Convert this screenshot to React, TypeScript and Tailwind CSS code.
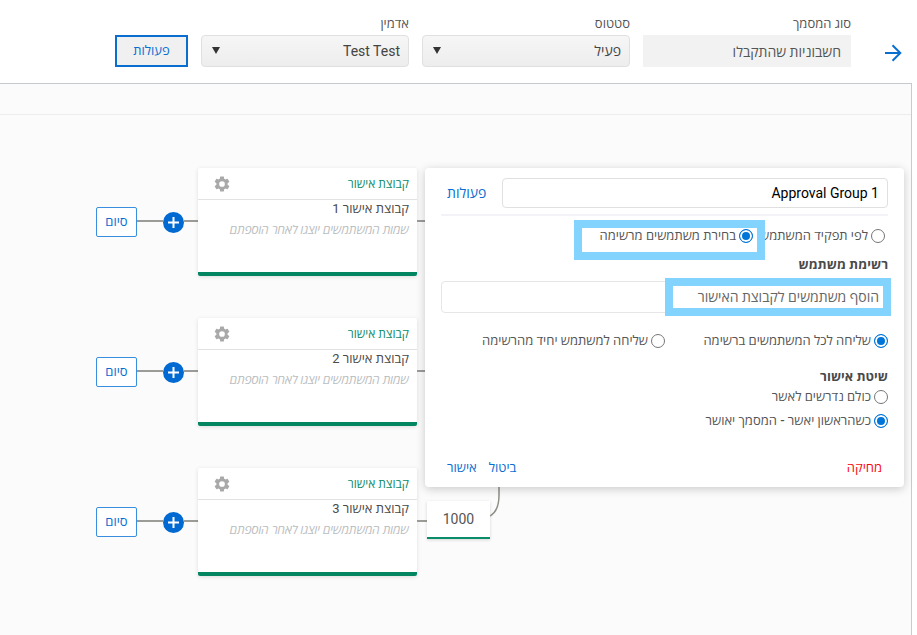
import { useState } from "react";

const approvalGroups = [
  { id: 1, name: "קבוצת אישור 1" },
  { id: 2, name: "קבוצת אישור 2" },
  { id: 3, name: "קבוצת אישור 3", amount: "1000" },
];

const GearIcon = () => (
  <svg viewBox="0 0 24 24" className="w-[18px] h-[18px]" fill="#a9a9a9" aria-hidden="true">
    <path d="M19.43 12.98c.04-.32.07-.64.07-.98s-.03-.66-.07-.98l2.11-1.65c.19-.15.24-.42.12-.64l-2-3.46c-.12-.22-.39-.3-.61-.22l-2.49 1c-.52-.4-1.08-.73-1.69-.98l-.38-2.65C14.46 2.18 14.25 2 14 2h-4c-.25 0-.46.18-.49.42l-.38 2.65c-.61.25-1.17.59-1.69.98l-2.49-1c-.23-.09-.49 0-.61.22l-2 3.46c-.13.22-.07.49.12.64l2.11 1.65c-.04.32-.07.65-.07.98s.03.66.07.98l-2.11 1.65c-.19.15-.24.42-.12.64l2 3.46c.12.22.39.3.61.22l2.49-1c.52.4 1.08.73 1.69.98l.38 2.65c.03.24.24.42.49.42h4c.25 0 .46-.18.49-.42l.38-2.65c.61-.25 1.17-.59 1.69-.98l2.49 1c.23.09.49 0 .61-.22l2-3.46c.12-.22.07-.49-.12-.64l-2.11-1.65zM12 15.8a3.8 3.8 0 1 1 0-7.6 3.8 3.8 0 0 1 0 7.6z" />
  </svg>
);

const SelectField = ({ id, label, options }: { id: string; label: string; options: string[] }) => (
  <div className="flex-1 min-w-0">
    <label htmlFor={id} className="block text-[13px] leading-5 text-[#555]">
      {label}
    </label>
    <div className="relative mt-px">
      <select
        id={id}
        className="w-full h-8 appearance-none rounded border border-[#e0e0e0] bg-linear-to-b from-[#f6f6f6] to-[#ededed] pr-2 pl-8 text-sm text-[#444]"
      >
        {options.map((option) => (
          <option key={option}>{option}</option>
        ))}
      </select>
      <svg viewBox="0 0 8 7" className="absolute left-[11px] top-3 w-2 h-[7px] pointer-events-none" aria-hidden="true">
        <path d="M0 0h8L4 7z" fill="#333" />
      </svg>
    </div>
  </div>
);

const Line = ({ className }: { className: string }) => (
  <div className={`h-[2px] mb-[2px] shrink-0 bg-[#9b9b98] ${className}`} />
);

const GroupRow = ({ name, amount }: { name: string; amount?: string }) => (
  <div dir="ltr" className="flex items-center">
    <button className="w-[41px] h-[30px] shrink-0 rounded-[2px] border border-[#3a8ee0] bg-white text-[13px] font-medium text-[#0a6ed1]">
      סיום
    </button>
    <Line className="w-[26px]" />
    <button aria-label="הוספה" className="w-[21px] h-[21px] shrink-0 rounded-full bg-[#0069d2] flex items-center justify-center">
      <svg viewBox="0 0 11 11" className="w-[11px] h-[11px]" stroke="#fff" strokeWidth="2" aria-hidden="true">
        <path d="M5.5 0v11M0 5.5h11" />
      </svg>
    </button>
    <Line className="w-[14px]" />
    <article dir="rtl" className="w-[219px] h-[108px] shrink-0 rounded-[2px] border-b-4 border-[#038562] bg-white shadow-[0_1px_4px_rgba(0,0,0,0.12)]">
      <header className="flex items-center justify-between h-8 pr-2 pl-[15px] border-b border-[#e2e2e2]">
        <h2 className="text-xs font-medium text-[#0b8c69]">קבוצת אישור</h2>
        <button aria-label="הגדרות">
          <GearIcon />
        </button>
      </header>
      <p className="px-2 text-[13px] leading-[18px] text-[#4a4a4a]">{name}</p>
      <p className="px-2 pt-[3px] text-xs leading-[18px] font-medium italic text-[#b9bdc0]">שמות המשתמשים יוצגו לאחר הוספתם</p>
    </article>
    <Line className="w-[10px]" />
    {amount && (
      <div className="relative mb-1">
        <div className="w-[63px] h-[38px] flex items-center justify-center border-b-2 border-[#0b8c69] bg-white text-sm text-[#555] shadow-[0_1px_3px_rgba(0,0,0,0.15)]">
          {amount}
        </div>
        <svg viewBox="0 0 12 34" className="absolute left-full bottom-[22px] w-3 h-[34px]" fill="none" stroke="#8f8f86" strokeWidth="1.5" aria-hidden="true">
          <path d="M9 0v12Q9 28 0 33" />
        </svg>
      </div>
    )}
  </div>
);

type RadioProps = { name: string; label: string; checked: boolean; onChange: () => void };

const Radio = ({ name, label, checked, onChange }: RadioProps) => (
  <label className="flex items-center gap-[3px] text-[13px] leading-6 font-medium text-[#555] whitespace-nowrap">
    <input
      type="radio"
      name={name}
      checked={checked}
      onChange={onChange}
      className="appearance-none w-[14px] h-[14px] shrink-0 rounded-full border border-[#767676] bg-white checked:border-[#0075d8] checked:bg-[#0075d8] checked:shadow-[inset_0_0_0_2px_#fff]"
    />
    {label}
  </label>
);

const GroupDialog = () => {
  const [source, setSource] = useState("list");
  const [sendTo, setSendTo] = useState("all");
  const [method, setMethod] = useState("first");

  return (
    <section
      role="dialog"
      aria-label="Approval Group 1"
      className="absolute top-[53px] right-[7px] w-[479px] rounded bg-white px-4 pt-[10px] pb-2 shadow-[0_2px_10px_rgba(0,0,0,0.2)]"
    >
      <div className="flex items-center gap-4 pb-[6px] border-b-2 border-[#f3f3f7]">
        <input
          aria-label="שם הקבוצה"
          defaultValue="Approval Group 1"
          className="flex-1 min-w-0 h-[30px] rounded border border-[#e0e0e0] px-2 text-sm text-black"
        />
        <button className="pr-0 pl-[6px] text-sm font-medium text-[#0a6ed1]">פעולות</button>
      </div>

      <div className="flex pt-2 pr-[3px]">
        <div className="w-[132px]">
          <Radio name="source" label="לפי תפקיד המשתמש" checked={source === "role"} onChange={() => setSource("role")} />
        </div>
        <div className="relative">
          <Radio name="source" label="בחירת משתמשים מרשימה" checked={source === "list"} onChange={() => setSource("list")} />
          <div className="absolute -top-1 -bottom-3 -right-3 w-[191px] border-8 border-[#82d4ff] pointer-events-none" />
        </div>
      </div>

      <label htmlFor="users" className="block pt-[5px] text-[13px] leading-6 font-bold text-[#4a4a4a]">
        רשימת משתמש
      </label>
      <div className="relative mt-1">
        <input
          id="users"
          placeholder="הוסף משתמשים לקבוצת האישור"
          className="block w-full h-8 rounded border border-[#e6e6e6] px-2 text-sm placeholder:text-[#666]"
        />
        <div className="absolute -top-[3px] -bottom-[3px] -right-[3px] w-[226px] border-8 border-[#82d4ff] pointer-events-none" />
      </div>

      <div className="flex pt-4">
        <div className="w-[223px]">
          <Radio name="send" label="שליחה לכל המשתמשים ברשימה" checked={sendTo === "all"} onChange={() => setSendTo("all")} />
        </div>
        <Radio name="send" label="שליחה למשתמש יחיד מהרשימה" checked={sendTo === "single"} onChange={() => setSendTo("single")} />
      </div>

      <h3 className="pt-3 text-[13px] leading-6 font-bold text-[#4a4a4a]">שיטת אישור</h3>
      <div className="flex flex-col items-start -mt-1">
        <Radio name="method" label="כולם נדרשים לאשר" checked={method === "everyone"} onChange={() => setMethod("everyone")} />
        <Radio name="method" label="כשהראשון יאשר - המסמך יאושר" checked={method === "first"} onChange={() => setMethod("first")} />
      </div>

      <footer className="flex items-center gap-3 pt-6 px-[6px] text-[13px] leading-[22px] font-medium text-[#0a6ed1]">
        <button className="ml-auto text-[#fb0a0a]">מחיקה</button>
        <button>ביטול</button>
        <button>אישור</button>
      </footer>
    </section>
  );
};

const App = () => {
  return (
    <div dir="rtl" className="min-h-screen flex flex-col bg-white font-[Roboto,'Open_Sans','Noto_Sans',sans-serif]">
      <header className="flex items-end gap-[13px] pt-[14px] pb-4 pr-[15px] pl-[115px]">
        <a href="#" aria-label="חזרה" className="w-[18px] h-7 ml-5 shrink-0 flex items-center">
          <svg viewBox="0 0 18 18" className="w-[18px] h-[18px]" fill="none" stroke="#0a6ed1" strokeWidth="2" aria-hidden="true">
            <path d="M1 9h15M8.5 1.2 16.3 9l-7.8 7.8" />
          </svg>
        </a>
        <div className="flex-1 min-w-0">
          <label htmlFor="docType" className="block text-[13px] leading-5 text-[#555]">
            סוג המסמך
          </label>
          <input
            id="docType"
            readOnly
            value="חשבוניות שהתקבלו"
            className="block w-full h-8 mt-px bg-[#f2f2f2] px-[10px] text-sm text-[#555]"
          />
        </div>
        <SelectField id="status" label="סטטוס" options={["פעיל", "לא פעיל"]} />
        <SelectField id="admin" label="אדמין" options={["Test Test"]} />
        <button className="w-[73px] h-8 shrink-0 border-2 border-[#0a6ed1] bg-[#f0f0f0] text-[13px] text-[#0a6ed1]">פעולות</button>
      </header>

      <main className="flex-1 mr-[5px] border-t border-r border-[#c5cccf] bg-[#fbfbfb]">
        <div className="h-[31px] border-b border-[#ececec]" />
        <div className="relative flex flex-col gap-[42px] pt-[53px] pl-24">
          {approvalGroups.map((group) => (
            <GroupRow key={group.id} name={group.name} amount={group.amount} />
          ))}
          <GroupDialog />
        </div>
      </main>
    </div>
  );
};

export default App;
